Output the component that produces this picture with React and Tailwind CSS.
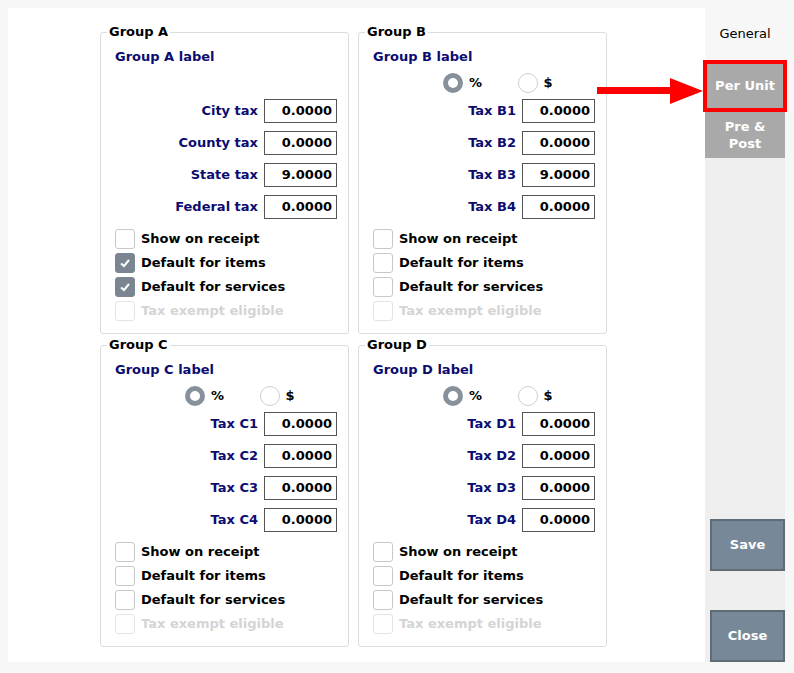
const font = { fontFamily: '"DejaVu Sans", Verdana, sans-serif' }

const Check = ({ checked, disabled, label }) => (
    <div className="flex items-center h-6 gap-[6px]">
        <div className={`w-5 h-5 rounded-[3px] border flex items-center justify-center ${checked ? 'bg-[#7a8591] border-[#7a8591]' : disabled ? 'border-[#e4e4e4] bg-white' : 'border-[#c8c8c8] bg-white'}`}>
            {checked && (
                <svg width="12" height="12" viewBox="0 0 12 12"><path d="M2 6.5 L5 9 L10 3" stroke="white" strokeWidth="2" fill="none" /></svg>
            )}
        </div>
        <span className={`text-[13px] font-bold ${disabled ? 'text-[#d4d4d4]' : 'text-black'}`}>{label}</span>
    </div>
)

const Radio = ({ checked, label }) => (
    <div className="flex items-center gap-[6px] w-[80px]">
        <div className={`w-5 h-5 rounded-full bg-white ${checked ? 'border-[5px] border-[#87919b]' : 'border border-[#c8d0d8]'}`} />
        <span className="text-[13px] font-bold text-black">{label}</span>
    </div>
)

const Row = ({ label, value }) => (
    <div className="flex items-center justify-end gap-[6px] h-8">
        <span className="text-[13px] font-bold text-[#0c0c70]">{label}</span>
        <div className="w-[73px] h-6 border border-[#555] bg-white text-right pr-[4px] text-[13px] font-bold leading-[22px]">{value}</div>
    </div>
)

const Group = ({ title, rows, radios, checks }) => (
    <div className="relative w-[249px] h-[302px] border border-[#d8dde2] rounded-[3px] px-[14px] pt-[14px]">
        <span className="absolute -top-[9px] left-[6px] bg-white px-[2px] text-[13px] font-bold leading-4">{title}</span>
        <div className="text-[13px] font-bold text-[#0c0c70] h-5">{title} label</div>
        <div className="h-[28px] flex items-center justify-center pl-[70px] pt-[4px]">
            {radios && <><Radio checked label="%" /><Radio label="$" /></>}
        </div>
        <div className="pr-[-3px] -mr-[3px]">
            {rows.map(([l, v]) => <Row key={l} label={l} value={v} />)}
        </div>
        <div className="mt-[4px]">
            <Check label="Show on receipt" checked={checks[0]} />
            <Check label="Default for items" checked={checks[1]} />
            <Check label="Default for services" checked={checks[2]} />
            <Check label="Tax exempt eligible" disabled />
        </div>
    </div>
)

const rowsFor = (g, s) => [1, 2, 3, 4].map(i => [`Tax ${g}${i}`, i === 3 && s ? '9.0000' : '0.0000'])

export default function App() {
    return (
        <div style={font} className="w-[794px] h-[673px] bg-[#f7f7f7] pt-2 pl-2 flex">
            <div className="w-[697px] h-[654px] bg-white pl-[92px] pt-[24px]">
                <div className="grid grid-cols-[249px_249px] gap-x-[9px] gap-y-[11px]">
                    <Group title="Group A" rows={[['City tax', '0.0000'], ['County tax', '0.0000'], ['State tax', '9.0000'], ['Federal tax', '0.0000']]} checks={[false, true, true]} />
                    <Group title="Group B" radios rows={rowsFor('B', true)} checks={[false, false, false]} />
                    <Group title="Group C" radios rows={rowsFor('C', false)} checks={[false, false, false]} />
                    <Group title="Group D" radios rows={rowsFor('D', false)} checks={[false, false, false]} />
                </div>
            </div>
            <div className="relative w-[80px] h-[654px] bg-[#efefef] flex flex-col">
                <div className="h-[52px] bg-[#f7f7f7] flex items-center justify-center text-[13px] text-black">General</div>
                <div className="h-[52px] -mx-[2px] border-[4px] border-[#ff0000] bg-[#a9a9a9] flex items-center justify-center text-[13px] font-bold text-white">Per Unit</div>
                <div className="h-[46px] bg-[#a9a9a9] flex items-center justify-center text-center text-[13px] font-bold text-white leading-[17px]">Pre &amp;<br />Post</div>
                <div className="flex-1" />
                <div className="ml-[5px] w-[75px] h-[52px] bg-[#778899] border-2 border-[#5f6b75] flex items-center justify-center text-[13px] font-bold text-white">Save</div>
                <div className="h-[39px]" />
                <div className="ml-[5px] w-[75px] h-[52px] bg-[#778899] border-2 border-[#5f6b75] flex items-center justify-center text-[13px] font-bold text-white">Close</div>
                <svg className="absolute left-[-108px] top-[70px]" width="106" height="26" viewBox="0 0 106 26">
                    <rect x="0" y="9" width="75" height="7" fill="#ff0000" />
                    <polygon points="73,0 106,13 73,26" fill="#ff0000" />
                </svg>
            </div>
        </div>
    )
}
